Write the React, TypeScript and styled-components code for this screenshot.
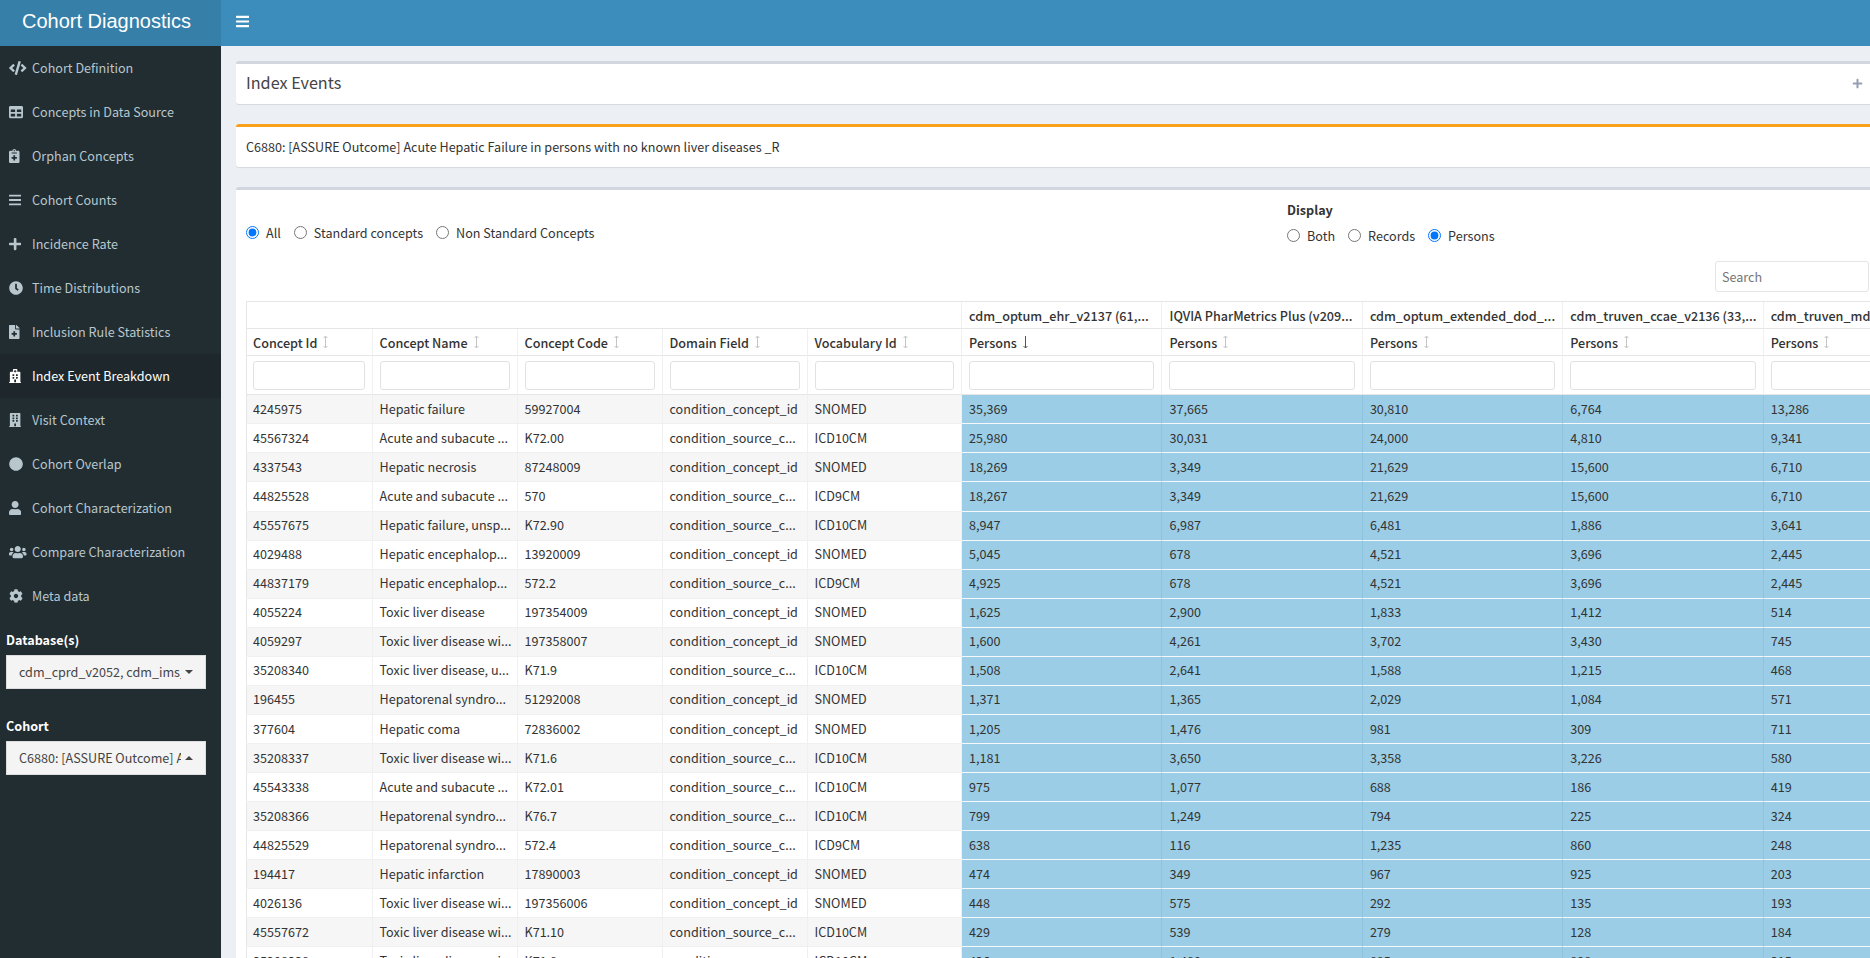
import React from 'react';
import styled, { createGlobalStyle } from 'styled-components';
import {
  FaBars, FaBuilding, FaCircle, FaClock, FaCode, FaCog, FaFileMedical, FaHospital,
  FaNotesMedical, FaPlus, FaTable, FaUser, FaUsers,
} from 'react-icons/fa';

const SANS = `'Noto Sans CJK SC', 'Noto Sans', sans-serif`;
const COLS = '126.5px 145px 145px 145px 154.6px repeat(5, 200.4px)';

const Global = createGlobalStyle`
  html, body { margin: 0; padding: 0; height: 100%; overflow: hidden; }
  body { font-family: ${SANS}; font-size: 12.6px; color: #333; background: #ecf0f5; }
  * { box-sizing: border-box; }
`;

const Page = styled.div`
  display: flex;
  flex-direction: column;
  width: 1870px;
  height: 958px;
  overflow: hidden;
`;
const Header = styled.header`
  display: flex;
  flex: 0 0 46px;
  background: #3c8dbc;
`;
const Logo = styled.div`
  width: 221px;
  padding-right: 8px;
  background: #367fa9;
  color: #fff;
  font: 20px/42px 'Liberation Sans', Arial, sans-serif;
  text-align: center;
`;
const Toggle = styled.div`
  display: flex;
  align-items: center;
  padding: 0 0 4px 15px;
  color: #fff;
  svg { width: 13.1px; height: 15px; }
`;
const Body = styled.div`
  display: flex;
  flex: 1;
  min-height: 0;
`;
const Sidebar = styled.aside`
  flex: 0 0 221px;
  background: #222d32;
`;
const MenuItem = styled.div<{ $active?: boolean }>`
  display: flex;
  align-items: center;
  height: 44px;
  padding-left: 9px;
  color: ${p => (p.$active ? '#fff' : '#b8c7ce')};
  background: ${p => (p.$active ? '#1e282c' : 'transparent')};
`;
const MenuIcon = styled.span<{ $w: number }>`
  display: flex;
  align-items: center;
  width: 23px;
  svg { height: 14px; width: ${p => p.$w}px; }
`;
const MenuLabel = styled.span`
  padding-bottom: 2px;
`;
const FormGroup = styled.div`
  padding: 0 15px 0 6px;
  margin-bottom: 28px;
  ${MenuItem} + & { margin-top: 13px; }
`;
const SideLabel = styled.div`
  height: 24px;
  line-height: 18px;
  font-weight: 700;
  color: #fff;
`;
const SelectBox = styled.div`
  display: flex;
  align-items: center;
  width: 200px;
  height: 34px;
  padding-left: 12px;
  background: #f4f4f4;
  border: 1px solid #ddd;
  color: #444;
`;
const SelectText = styled.span`
  width: 162px;
  padding-bottom: 2px;
  overflow: hidden;
  white-space: nowrap;
`;
const Caret = styled.i<{ $up?: boolean }>`
  margin-left: 4px;
  border-left: 4px solid transparent;
  border-right: 4px solid transparent;
  border-top: ${p => (p.$up ? '0' : '4px solid #444')};
  border-bottom: ${p => (p.$up ? '4px solid #444' : '0')};
`;
const Main = styled.main`
  flex: 1;
  min-width: 0;
  overflow: hidden;
  padding: 15px 0 0 15px;
`;
const Box = styled.section<{ $accent?: string; $h?: number }>`
  width: 1643px;
  margin-bottom: 20px;
  height: ${p => (p.$h ? `${p.$h}px` : 'auto')};
  background: #fff;
  border-top: 3px solid ${p => p.$accent || '#d2d6de'};
  border-radius: 3px;
  box-shadow: 0 1px 1px rgba(0, 0, 0, 0.1);
`;
const TitleRow = styled.div`
  display: flex;
  align-items: center;
  justify-content: space-between;
  height: 40px;
  padding: 0 16px 5px 10px;
  font-size: 16.2px;
  color: #444;
`;
const PlusIcon = styled(FaPlus)`
  width: 11px;
  height: 11px;
  margin-top: 3px;
  color: #97a0b3;
`;
const NoticeRow = styled.div`
  display: flex;
  align-items: center;
  height: 40px;
  padding: 0 10px 1px;
`;
const FilterRow = styled.div`
  display: grid;
  grid-template-columns: 1041px 1fr;
  height: 71px;
  padding-left: 10px;
`;
const RadioRow = styled.div<{ $top: number }>`
  display: flex;
  align-items: center;
  height: 18px;
  margin-top: ${p => p.$top}px;
`;
const RadioLabel = styled.label`
  display: flex;
  align-items: center;
  margin-right: 13px;
  white-space: nowrap;
`;
const Radio = styled.input.attrs({ type: 'radio', readOnly: true })`
  width: 13px;
  height: 13px;
  margin: 0 7px 0 0;
`;
const DisplayTitle = styled.div`
  margin-top: 10px;
  height: 20px;
  line-height: 20px;
  font-weight: 700;
`;
const SearchRow = styled.div`
  display: flex;
  justify-content: flex-end;
  height: 40px;
  padding-right: 10px;
`;
const SearchInput = styled.div`
  width: 154px;
  height: 31px;
  padding-left: 6px;
  line-height: 29px;
  color: #757575;
  background: #fff;
  border: 1px solid #e5e5e5;
  border-radius: 3px;
`;
const Table = styled.div`
  margin-left: 10px;
  width: 1718.5px;
  border-top: 1px solid #e6e6e6;
`;
const Row = styled.div<{ $h: number; $odd?: boolean }>`
  display: grid;
  grid-template-columns: ${COLS};
  height: ${p => p.$h}px;
  background: ${p => (p.$odd ? '#f6f6f6' : '#fff')};
  box-shadow: inset 1px 0 0 #e6e6e6;
`;
const Cell = styled.div<{ $bar?: boolean }>`
  display: flex;
  align-items: center;
  min-width: 0;
  padding: 0 7px 2px;
  white-space: nowrap;
  overflow: hidden;
  background: ${p => (p.$bar ? '#9bcde6' : 'transparent')};
  border-right: 1px solid ${p => (p.$bar ? '#8fc3de' : '#f0f0f0')};
  border-bottom: 1px solid ${p => (p.$bar ? '#f4f8fb' : '#f0f0f0')};
`;
const HeadCell = styled(Cell)<{ $span?: number }>`
  grid-column: span ${p => p.$span || 1};
  padding-bottom: 0;
  font-weight: 500;
  color: #333;
  border-bottom-color: #e6e6e6;
  border-right-color: #f0f0f0;
`;
const FilterInput = styled.div`
  width: 100%;
  height: 29px;
  background: #fff;
  border: 1px solid #e2e2e2;
  border-radius: 3px;
`;
const SortMark = styled.svg`
  flex: none;
  width: 7px;
  height: 14px;
  margin-left: 5px;
`;

const Sort = ({ active }: { active?: boolean }) => (
  <SortMark viewBox="0 0 7 14" fill="none" stroke={active ? '#555' : '#c4c4c4'} strokeWidth="1">
    <path d="M3.5 1v12" />
    {active ? null : <path d="M1.5 3l2-2 2 2" />}
    <path d="M1.5 11l2 2 2-2" />
  </SortMark>
);

const MENU: [React.ReactNode, number, string][] = [
  [<FaCode />, 17.5, 'Cohort Definition'],
  [<FaTable />, 14, 'Concepts in Data Source'],
  [<FaNotesMedical />, 10.5, 'Orphan Concepts'],
  [<FaBars />, 12.25, 'Cohort Counts'],
  [<FaPlus />, 12.25, 'Incidence Rate'],
  [<FaClock />, 14, 'Time Distributions'],
  [<FaFileMedical />, 10.5, 'Inclusion Rule Statistics'],
  [<FaHospital />, 12.25, 'Index Event Breakdown'],
  [<FaBuilding />, 12.25, 'Visit Context'],
  [<FaCircle />, 14, 'Cohort Overlap'],
  [<FaUser />, 12.25, 'Cohort Characterization'],
  [<FaUsers />, 17.5, 'Compare Characterization'],
  [<FaCog />, 14, 'Meta data'],
];

const C = 'condition_concept_id';
const S = 'condition_source_c...';
const ROWS: string[][] = [
  ['4245975', 'Hepatic failure', '59927004', C, 'SNOMED', '35,369', '37,665', '30,810', '6,764', '13,286'],
  ['45567324', 'Acute and subacute ...', 'K72.00', S, 'ICD10CM', '25,980', '30,031', '24,000', '4,810', '9,341'],
  ['4337543', 'Hepatic necrosis', '87248009', C, 'SNOMED', '18,269', '3,349', '21,629', '15,600', '6,710'],
  ['44825528', 'Acute and subacute ...', '570', S, 'ICD9CM', '18,267', '3,349', '21,629', '15,600', '6,710'],
  ['45557675', 'Hepatic failure, unsp...', 'K72.90', S, 'ICD10CM', '8,947', '6,987', '6,481', '1,886', '3,641'],
  ['4029488', 'Hepatic encephalop...', '13920009', C, 'SNOMED', '5,045', '678', '4,521', '3,696', '2,445'],
  ['44837179', 'Hepatic encephalop...', '572.2', S, 'ICD9CM', '4,925', '678', '4,521', '3,696', '2,445'],
  ['4055224', 'Toxic liver disease', '197354009', C, 'SNOMED', '1,625', '2,900', '1,833', '1,412', '514'],
  ['4059297', 'Toxic liver disease wi...', '197358007', C, 'SNOMED', '1,600', '4,261', '3,702', '3,430', '745'],
  ['35208340', 'Toxic liver disease, u...', 'K71.9', S, 'ICD10CM', '1,508', '2,641', '1,588', '1,215', '468'],
  ['196455', 'Hepatorenal syndro...', '51292008', C, 'SNOMED', '1,371', '1,365', '2,029', '1,084', '571'],
  ['377604', 'Hepatic coma', '72836002', C, 'SNOMED', '1,205', '1,476', '981', '309', '711'],
  ['35208337', 'Toxic liver disease wi...', 'K71.6', S, 'ICD10CM', '1,181', '3,650', '3,358', '3,226', '580'],
  ['45543338', 'Acute and subacute ...', 'K72.01', S, 'ICD10CM', '975', '1,077', '688', '186', '419'],
  ['35208366', 'Hepatorenal syndro...', 'K76.7', S, 'ICD10CM', '799', '1,249', '794', '225', '324'],
  ['44825529', 'Hepatorenal syndro...', '572.4', S, 'ICD9CM', '638', '116', '1,235', '860', '248'],
  ['194417', 'Hepatic infarction', '17890003', C, 'SNOMED', '474', '349', '967', '925', '203'],
  ['4026136', 'Toxic liver disease wi...', '197356006', C, 'SNOMED', '448', '575', '292', '135', '193'],
  ['45557672', 'Toxic liver disease wi...', 'K71.10', S, 'ICD10CM', '429', '539', '279', '128', '184'],
  ['35208338', 'Toxic liver disease wi...', 'K71.8', S, 'ICD10CM', '426', '1,480', '885', '898', '315'],
];
const GROUPS = [
  'cdm_optum_ehr_v2137 (61,...',
  'IQVIA PharMetrics Plus (v209...',
  'cdm_optum_extended_dod_...',
  'cdm_truven_ccae_v2136 (33,...',
  'cdm_truven_mdcr_v2134 (9,...',
];
const LEFT_HEADS = ['Concept Id', 'Concept Name', 'Concept Code', 'Domain Field', 'Vocabulary Id'];

export default function App() {
  return (
    <Page>
      <Global />
      <Header>
        <Logo>Cohort Diagnostics</Logo>
        <Toggle><FaBars /></Toggle>
      </Header>
      <Body>
        <Sidebar>
          {MENU.map(([icon, w, label]) => (
            <MenuItem key={label} $active={label === 'Index Event Breakdown'}>
              <MenuIcon $w={w}>{icon}</MenuIcon>
              <MenuLabel>{label}</MenuLabel>
            </MenuItem>
          ))}
          <FormGroup>
            <SideLabel>Database(s)</SideLabel>
            <SelectBox>
              <SelectText>cdm_cprd_v2052, cdm_ims_australia_v2141</SelectText>
              <Caret />
            </SelectBox>
          </FormGroup>
          <FormGroup>
            <SideLabel>Cohort</SideLabel>
            <SelectBox>
              <SelectText>C6880: [ASSURE Outcome] Acute Hepatic Failure</SelectText>
              <Caret $up />
            </SelectBox>
          </FormGroup>
        </Sidebar>
        <Main>
          <Box>
            <TitleRow>Index Events<PlusIcon /></TitleRow>
          </Box>
          <Box $accent="#f9a11b">
            <NoticeRow>C6880: [ASSURE Outcome] Acute Hepatic Failure in persons with no known liver diseases _R</NoticeRow>
          </Box>
          <Box $h={900}>
            <FilterRow>
              <RadioRow $top={33}>
                <RadioLabel><Radio name="scope" defaultChecked />All</RadioLabel>
                <RadioLabel><Radio name="scope" />Standard concepts</RadioLabel>
                <RadioLabel><Radio name="scope" />Non Standard Concepts</RadioLabel>
              </RadioRow>
              <div>
                <DisplayTitle>Display</DisplayTitle>
                <RadioRow $top={6}>
                  <RadioLabel><Radio name="show" />Both</RadioLabel>
                  <RadioLabel><Radio name="show" />Records</RadioLabel>
                  <RadioLabel><Radio name="show" defaultChecked />Persons</RadioLabel>
                </RadioRow>
              </div>
            </FilterRow>
            <SearchRow><SearchInput>Search</SearchInput></SearchRow>
            <Table>
              <Row $h={27.3}>
                <HeadCell $span={5} />
                {GROUPS.map(g => <HeadCell key={g}>{g}</HeadCell>)}
              </Row>
              <Row $h={27}>
                {LEFT_HEADS.map(h => <HeadCell key={h}>{h}<Sort /></HeadCell>)}
                {GROUPS.map((g, i) => <HeadCell key={g}>Persons<Sort active={i === 0} /></HeadCell>)}
              </Row>
              <Row $h={39}>
                {Array.from({ length: 10 }, (_, i) => (
                  <HeadCell key={i}><FilterInput /></HeadCell>
                ))}
              </Row>
              {ROWS.map((r, i) => (
                <Row key={r[0]} $h={29.07} $odd={i % 2 === 0}>
                  {r.map((v, j) => <Cell key={j} $bar={j > 4}>{v}</Cell>)}
                </Row>
              ))}
            </Table>
          </Box>
        </Main>
      </Body>
    </Page>
  );
}
